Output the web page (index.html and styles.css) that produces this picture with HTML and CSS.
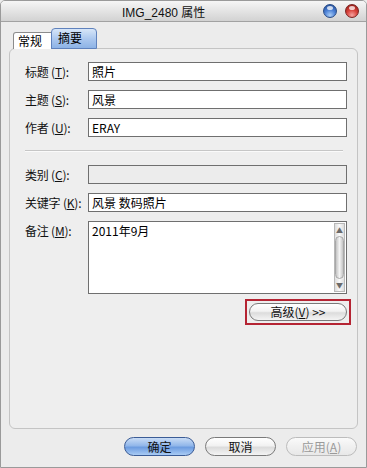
FILE: index.html
```html
<!DOCTYPE html>
<html lang="zh-CN">
<head>
<meta charset="UTF-8" />
<meta name="viewport" content="width=device-width, initial-scale=1" />
<title>IMG_2480 属性</title>
<link rel="stylesheet" href="styles.css">
</head>
<body>

  <div class="window">
    <!-- Title bar -->
    <div class="titlebar">
      <span class="title">IMG_2480 属性</span>
      <div class="lights">
        <span class="light blue"></span>
        <span class="light red"></span>
      </div>
    </div>

    <!-- Tabs -->
    <div class="tabs">
      <div class="tab">常规</div>
      <div class="tab active">摘要</div>
    </div>

    <!-- Summary page -->
    <div class="panel">
      <div class="form">
        <span class="label">标题 (<u>T</u>):</span>
        <div class="field">照片</div>
        <span class="label">主题 (<u>S</u>):</span>
        <div class="field">风景</div>
        <span class="label">作者 (<u>U</u>):</span>
        <div class="field">ERAY</div>
      </div>

      <div class="sep"></div>

      <div class="form">
        <span class="label">类别 (<u>C</u>):</span>
        <div class="field disabled"></div>
        <span class="label">关键字 (<u>K</u>):</span>
        <div class="field">风景 数码照片</div>
        <span class="label top">备注 (<u>M</u>):</span>
        <div class="field memo">
          <div class="memo-text">2011年9月</div>
          <div class="scrollbar">
            <span class="arrow up">&#9650;</span>
            <span class="thumb"></span>
            <span class="arrow down">&#9660;</span>
          </div>
        </div>
      </div>

      <div class="advanced">
        <div class="highlight">
          <button class="pill wide">高级(<u>V</u>) &gt;&gt;</button>
        </div>
      </div>
    </div>

    <!-- Dialog buttons -->
    <div class="actions">
      <button class="pill default">确定</button>
      <button class="pill">取消</button>
      <button class="pill" disabled>应用(<u>A</u>)</button>
    </div>
  </div>

</body>
</html>
```

FILE: styles.css
```css
/* Reset and base */
* {
  box-sizing: border-box;
}
body {
  margin: 0;
  font-family: "Liberation Sans", "Noto Sans CJK SC", sans-serif;
  font-size: 12px;
  color: #000;
  background: #ececec;
}
.window {
  width: 367px;
  height: 468px;
  border: 1px solid #9a9a9a;
  border-radius: 5px 5px 0 0;
  background: #ececec;
  overflow: hidden;
}

/* Title bar */
.titlebar {
  height: 21px;
  display: flex;
  align-items: center;
  background: linear-gradient(#f6f6f6 0%, #e4e4e4 50%, #d2d2d2 100%);
  border-bottom: 1px solid #a2a2a2;
}
.title {
  margin-left: 121px;
  font-size: 12px;
  color: #111;
}
.lights {
  margin-left: auto;
  margin-right: 7px;
  display: flex;
  gap: 8px;
}
.light {
  position: relative;
  width: 14px;
  height: 14px;
  border-radius: 50%;
  border: 1px solid #4a4a4a;
}
.light.blue {
  background: radial-gradient(circle at 50% 85%, #a9cdf7 0%, #4d82d6 45%, #1d4590 100%);
  border-color: #274a85;
}
.light.red {
  background: radial-gradient(circle at 50% 85%, #f5a3a0 0%, #d9433c 45%, #8a1410 100%);
  border-color: #7a2320;
}
.light:after {
  content: "";
  position: absolute;
  top: 1px;
  left: 3px;
  width: 6px;
  height: 4px;
  border-radius: 50%;
  background: rgba(255, 255, 255, 0.75);
}

/* Tabs */
.tabs {
  height: 26px;
  padding-left: 12px;
  display: flex;
  align-items: flex-end;
}
.tab {
  position: relative;
  z-index: 1;
  margin-bottom: -1px;
  height: 17px;
  width: 39px;
  padding-left: 4px;
  line-height: 16px;
  font-family: "Noto Sans CJK SC", sans-serif;
  font-size: 12px;
  background: #fff;
  border: 1px solid #8c8c8c;
  border-bottom: none;
  border-radius: 3px 0 0 0;
}
.tab.active {
  height: 21px;
  width: 46px;
  margin-left: -1px;
  padding-left: 6px;
  line-height: 18px;
  background: linear-gradient(#d7e6f8 0%, #a9c6ee 55%, #8db3e6 100%);
  border: 1px solid #5f82bd;
  border-radius: 4px 4px 0 0;
}

/* Panel */
.panel {
  height: 381px;
  margin: 0 8px;
  padding: 13px 10px 0 15px;
  border: 1px solid #c4c4c4;
  border-radius: 6px;
  background: #eeeeee;
}
.form {
  display: grid;
  grid-template-columns: 63px 1fr;
  row-gap: 9px;
  align-items: center;
}
.label {
  font-family: "Noto Sans CJK SC", sans-serif;
  font-size: 12px;
  line-height: 19px;
  color: #111;
  white-space: nowrap;
  letter-spacing: -0.2px;
}
.label.top {
  align-self: start;
}
.label u, .pill u {
  text-underline-offset: 1px;
}
.field {
  height: 19px;
  padding-left: 3px;
  line-height: 17px;
  font-family: "Noto Sans CJK SC", sans-serif;
  font-size: 12px;
  background: #fff;
  border: 1px solid #6f6f6f;
}
.field.disabled {
  background: #ececec;
}
.sep {
  height: 2px;
  margin: 13px 4px 13px 0;
  border-top: 1px solid #c6c6c6;
  border-bottom: 1px solid #fafafa;
}

/* Memo box with scrollbar */
.field.memo {
  align-self: start;
  height: 73px;
  display: flex;
  padding-right: 1px;
}
.memo-text {
  flex: 1;
}
.scrollbar {
  width: 11px;
  margin: 1px 0;
  display: flex;
  flex-direction: column;
  background: linear-gradient(90deg, #e4e4e4, #f8f8f8, #e4e4e4);
  border: 1px solid #b8b8b8;
}
.arrow {
  height: 12px;
  font-size: 7px;
  line-height: 12px;
  text-align: center;
  color: #6a6a6a;
  background: linear-gradient(90deg, #dcdcdc, #fafafa, #dcdcdc);
}
.thumb {
  flex: 1;
  border-radius: 5px;
  background: linear-gradient(90deg, #c4c4c4, #f4f4f4 50%, #c4c4c4);
  border: 1px solid #a8a8a8;
}

/* Advanced button */
.advanced {
  display: flex;
  justify-content: flex-end;
  margin: 5px -4px 0 0;
}
.highlight {
  padding: 2px;
  border: 2px solid #b52433;
}

/* Aqua pill buttons */
.pill {
  height: 19px;
  width: 71px;
  padding: 0;
  font-family: "Noto Sans CJK SC", sans-serif;
  font-size: 12px;
  line-height: 16px;
  color: #111;
  border: 1px solid #7a7a7a;
  border-radius: 10px;
  background: linear-gradient(#ffffff 0%, #f2f2f2 45%, #dcdcdc 55%, #f4f4f4 100%);
}
.pill.wide {
  width: 98px;
  height: 18px;
}
.pill.default {
  border-color: #3b5c96;
  background: linear-gradient(#c9dcf5 0%, #92b7ea 45%, #6d9ce0 55%, #a9cbf4 100%);
}
.pill:disabled {
  color: #9a9a9a;
  border-color: #bcbcbc;
  background: linear-gradient(#fafafa 0%, #f0f0f0 50%, #e8e8e8 100%);
}
.actions {
  display: flex;
  justify-content: flex-end;
  gap: 10px;
  margin-top: 8px;
  padding-right: 9px;
}
```
